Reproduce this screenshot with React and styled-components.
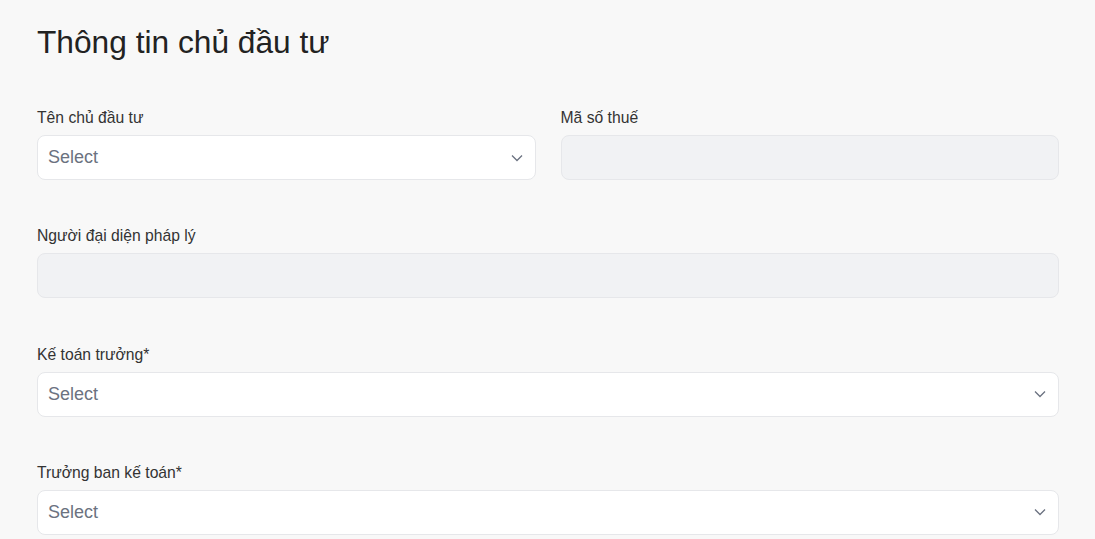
import React from 'react';
import styled, { createGlobalStyle } from 'styled-components';

const GlobalStyle = createGlobalStyle`
  html, body {
    margin: 0;
    padding: 0;
    background: #f8f8f8;
    font-family: "Liberation Sans", Arial, sans-serif;
  }
`;

const Page = styled.div`
  padding: 24px 36px 0 37px;
`;

const Title = styled.h1`
  margin: 0 0 48px;
  font-size: 31.7px;
  line-height: 36px;
  font-weight: 400;
  color: #222;
`;

const Grid = styled.div`
  display: grid;
  grid-template-columns: 1fr 1fr;
  column-gap: 25px;
  row-gap: 46.3px;
`;

const Field = styled.div`
  display: flex;
  flex-direction: column;
  gap: 7px;
  grid-column: ${props => (props.full ? '1 / -1' : 'auto')};
`;

const Label = styled.label`
  font-size: 15.7px;
  line-height: 20px;
  color: #333;
`;

const Box = styled.div`
  box-sizing: border-box;
  height: 45px;
  border: 1px solid #e6e7ea;
  border-radius: 8px;
  background: ${props => (props.disabled ? '#f1f2f4' : '#fff')};
  display: flex;
  align-items: center;
  justify-content: space-between;
  padding: 0 12px 0 10px;
  cursor: ${props => (props.disabled ? 'not-allowed' : 'pointer')};
`;

const Placeholder = styled.span`
  font-size: 18px;
  color: #6b7280;
`;

const Chevron = () => (
  <svg width="12" height="8" viewBox="0 0 12 8" fill="none">
    <polyline points="1,1.5 6,6.5 11,1.5" stroke="#6b7280" strokeWidth="1.3" />
  </svg>
);

const Select = () => (
  <Box>
    <Placeholder>Select</Placeholder>
    <Chevron />
  </Box>
);

const App = () => (
  <Page>
    <GlobalStyle />
    <Title>Thông tin chủ đầu tư</Title>
    <Grid>
      <Field>
        <Label>Tên chủ đầu tư</Label>
        <Select />
      </Field>
      <Field>
        <Label>Mã số thuế</Label>
        <Box disabled />
      </Field>
      <Field full>
        <Label>Người đại diện pháp lý</Label>
        <Box disabled />
      </Field>
      <Field full>
        <Label>Kế toán trưởng*</Label>
        <Select />
      </Field>
      <Field full>
        <Label>Trưởng ban kế toán*</Label>
        <Select />
      </Field>
    </Grid>
  </Page>
);

export default App;
